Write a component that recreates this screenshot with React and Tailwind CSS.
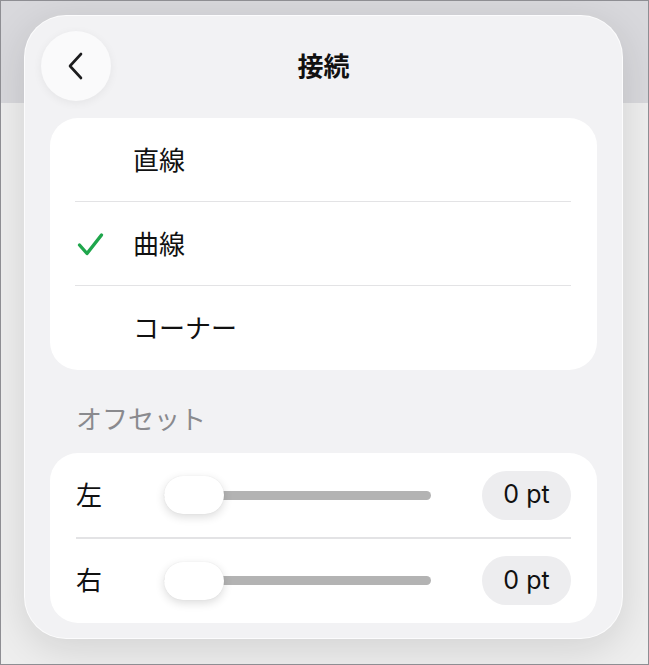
import React, { useState } from 'react';

const FONT = { fontFamily: '"Inter", "Noto Sans CJK JP", sans-serif' };

const ChevronLeft = () => (
  <svg width="22" height="30" viewBox="0 0 22 30" fill="none">
    <path d="M16 3 L5 15 L16 27" stroke="#1c1c1e" strokeWidth="2.6" strokeLinecap="round" strokeLinejoin="round" />
  </svg>
);

const Check = () => (
  <svg width="27" height="25" viewBox="0 0 27 25" fill="none">
    <path d="M2.5 13 L10 21.5 L24.5 3" stroke="#1fa64c" strokeWidth="3.4" strokeLinecap="round" strokeLinejoin="round" />
  </svg>
);

const options = ['直線', '曲線', 'コーナー'];

const OffsetRow = ({ label }) => (
  <div className="flex items-center h-[84px] pl-[26px] pr-[26px]">
    <span className="w-[88px] text-[26px] text-[#111]">{label}</span>
    <div className="relative w-[267px] h-[38px] flex items-center">
      <div className="w-full h-[9px] rounded-full bg-[#b3b3b3]" />
      <div className="absolute left-0 top-0 w-[60px] h-[38px] rounded-full bg-white shadow-[0_3px_10px_rgba(0,0,0,0.14),0_0_1px_rgba(0,0,0,0.1)]" />
    </div>
    <div className="ml-auto w-[89px] h-[49px] rounded-full bg-[#ededef] flex items-center justify-center text-[25px] text-[#111]">
      0 pt
    </div>
  </div>
);

export default function App() {
  const [selected, setSelected] = useState(1);

  return (
    <div className="relative w-[649px] h-[665px] border border-[#8e8e93] bg-[#eeeeee] overflow-hidden" style={FONT}>
      {/* dimmed toolbar strip behind the popover */}
      <div className="h-[102px] bg-[#d8d8dc]" />

      {/* popover */}
      <div className="absolute left-[23px] top-[14px] w-[599px] h-[624px] rounded-[42px] bg-[#f2f2f4] border border-white/80 shadow-[0_10px_40px_rgba(0,0,0,0.12)] px-[25px] pb-[16px]">
        <div className="relative h-[102px]">
          <button className="absolute left-[-9px] top-[15px] w-[70px] h-[70px] rounded-full bg-[#fafafb] flex items-center justify-center shadow-[0_2px_10px_rgba(0,0,0,0.06)]">
            <ChevronLeft />
          </button>
          <div className="pt-[35px] text-center text-[26px] font-semibold text-[#111] leading-[32px]">接続</div>
        </div>

        <div className="rounded-[28px] bg-white">
          {options.map((opt, i) => (
            <div key={opt} onClick={() => setSelected(i)} className="relative flex items-center h-[84px] pl-[27px] cursor-pointer">
              <div className="w-[56px] flex items-center">{selected === i && <Check />}</div>
              <span className="text-[26px] text-[#111]">{opt}</span>
              {i < options.length - 1 && (
                <div className="absolute bottom-0 left-[25px] right-[26px] h-[1.5px] bg-[#e3e3e5]" />
              )}
            </div>
          ))}
        </div>

        <div className="h-[83px] flex items-center pl-[26px] pt-[16px] text-[26px] text-[#8a8a8e]">オフセット</div>

        <div className="rounded-[28px] bg-white">
          <OffsetRow label="左" />
          <div className="ml-[26px] mr-[26px] h-[1.5px] bg-[#e3e3e5]" />
          <OffsetRow label="右" />
        </div>
      </div>
    </div>
  );
}
